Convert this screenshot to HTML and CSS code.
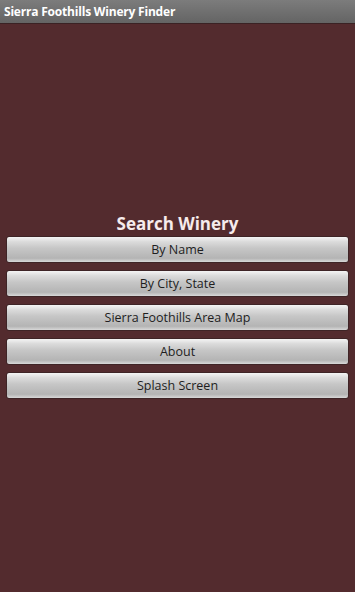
FILE: index.html
```html
<!DOCTYPE html>
<html lang="en">
<head>
    <meta charset="UTF-8">
    <meta name="viewport" content="width=device-width, initial-scale=1.0">
    <title>Sierra Foothills Winery Finder</title>
    <link rel="stylesheet" href="styles.css">
</head>
<body>
    <div class="screen">
        <header class="title-bar">Sierra Foothills Winery Finder</header>

        <main class="content">
            <h1 class="heading">Search Winery</h1>
            <div class="menu">
                <button class="menu-button">By Name</button>
                <button class="menu-button">By City, State</button>
                <button class="menu-button">Sierra Foothills Area Map</button>
                <button class="menu-button">About</button>
                <button class="menu-button">Splash Screen</button>
            </div>
        </main>
    </div>
</body>
</html>
```

FILE: styles.css
```css
:root {
    --background: #532b2e;
    --title-top: #7c7c7c;
    --title-bottom: #646464;
    --heading: #f6ecec;
    --button-text: #1e1e1e;
}

* {
    margin: 0;
    padding: 0;
    box-sizing: border-box;
    font-family: 'Open Sans', 'Noto Sans', 'DejaVu Sans', sans-serif;
}

body {
    background: var(--background);
    width: 355px;
    height: 592px;
    overflow: hidden;
}

.screen {
    height: 100%;
    display: flex;
    flex-direction: column;
}

.title-bar {
    height: 24px;
    padding-left: 4px;
    background: linear-gradient(180deg, var(--title-top) 0%, var(--title-bottom) 100%);
    border-bottom: 1px solid #3a2224;
    color: #ffffff;
    font-size: 12px;
    font-weight: 700;
    letter-spacing: -0.2px;
    line-height: 23px;
    white-space: nowrap;
}

.content {
    flex: 1;
    display: flex;
    flex-direction: column;
    justify-content: center;
    padding: 0 6px;
    margin-top: -4px;
}

.heading {
    text-align: center;
    color: var(--heading);
    font-size: 17px;
    font-weight: 700;
    line-height: 22px;
    margin-bottom: 1px;
}

.menu {
    display: flex;
    flex-direction: column;
    gap: 7px;
}

.menu-button {
    height: 27px;
    width: 100%;
    border: 1px solid #3e2426;
    border-radius: 3px;
    background: linear-gradient(180deg,
        #f4f4f4 0%,
        #dcdcdc 18%,
        #c6c6c6 45%,
        #b4b4b4 85%,
        #d8d8d8 100%);
    color: var(--button-text);
    font-size: 12.5px;
    cursor: pointer;
}
```
